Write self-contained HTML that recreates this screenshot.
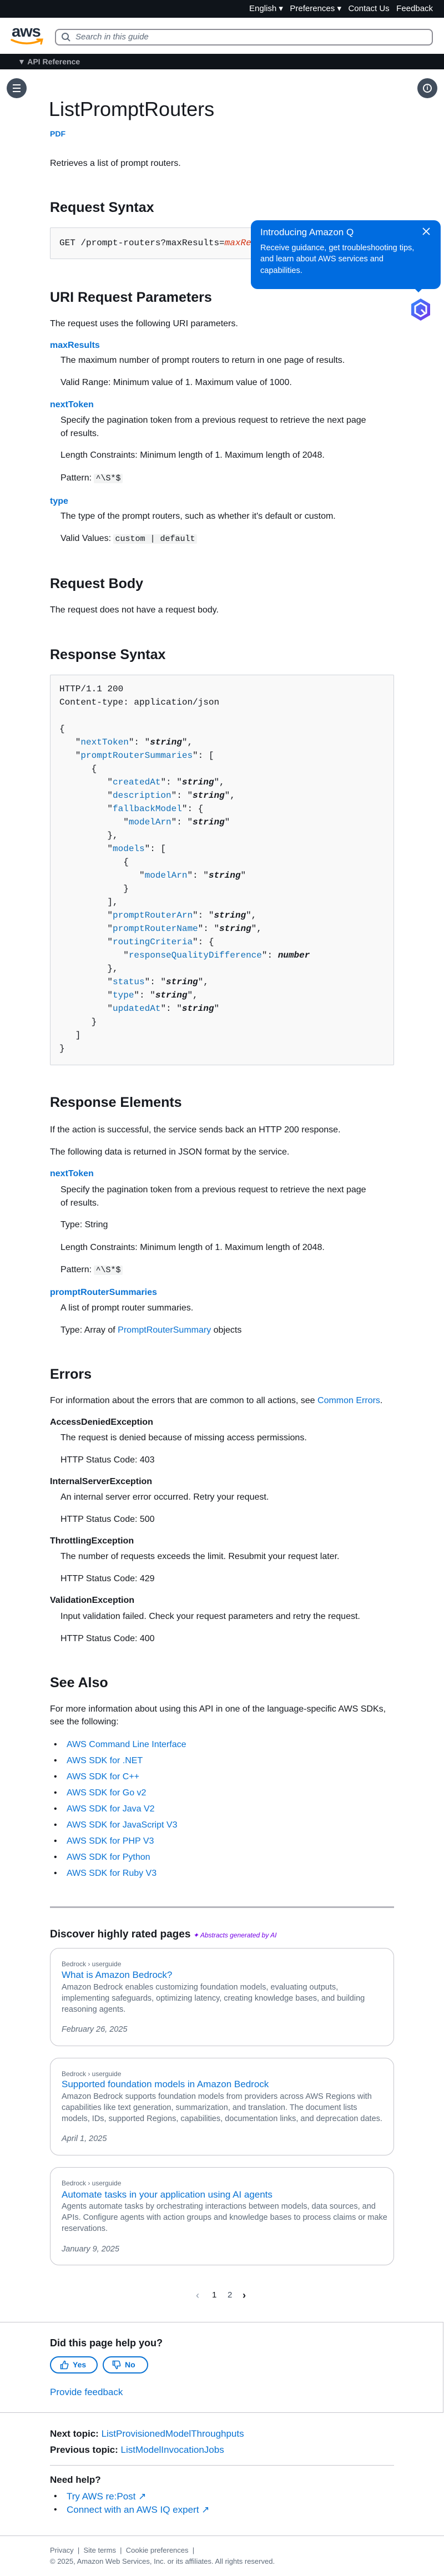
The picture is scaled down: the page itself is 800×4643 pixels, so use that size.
<!DOCTYPE html>
<html><head><meta charset="utf-8">
<style>
*{margin:0;padding:0;box-sizing:border-box}
body{width:800px;height:4643px;position:relative;background:#fff;font-family:"Liberation Sans",sans-serif;color:#16191f;overflow:hidden}
.a{position:absolute;white-space:nowrap;line-height:24px;font-size:16px}
.l{color:#0972d3}
.b{font-weight:bold}
.h2{font-size:25px;font-weight:bold;line-height:32px}
.m{font-family:"Liberation Mono",monospace}
.ic{font-family:"Liberation Mono",monospace;font-size:15px;background:#f2f3f3;padding:0 3px;border-radius:2px}
.code{position:absolute;left:90px;width:620px;background:#f9f9f9;border:1px solid #d1d5db;border-radius:2px;overflow:hidden}
pre{font-family:"Liberation Mono",monospace;font-size:16px;line-height:24px;color:#16191f}
.k{color:#0f6eb8}
.s{font-weight:bold;font-style:italic}
.card{position:absolute;left:90px;width:620px;border:1px solid #c6c6cd;border-radius:16px}
.bc{font-size:12px;color:#5f6b7a;line-height:16px}
.ct{font-size:17px;color:#0972d3;line-height:22px}
.cd{font-size:14.5px;color:#5f6b7a;line-height:20px}
.dt{font-size:14.5px;color:#5f6b7a;font-style:italic;line-height:20px}
</style></head><body>

<!-- top bar -->
<div style="position:absolute;left:0;top:0;width:800px;height:32px;background:#0f141a"></div>
<div class="a" style="top:4px;left:449px;color:#fff;font-size:15px">English ▾&nbsp;&nbsp; Preferences ▾&nbsp;&nbsp; Contact Us&nbsp;&nbsp; Feedback</div>
<!-- header -->
<div class="a" style="top:40px;left:21px;font-size:29px;font-weight:bold;color:#232f3e;letter-spacing:-1px;line-height:34px">aws</div>
<svg style="position:absolute;left:19px;top:68px" width="60" height="15" viewBox="0 0 60 15"><path d="M2 4 Q28 16 54 5" stroke="#ff9900" stroke-width="3.5" fill="none" stroke-linecap="round"/><path d="M48 3 L57 3 L55 11" stroke="#ff9900" stroke-width="3" fill="none" stroke-linecap="round"/></svg>
<div style="position:absolute;left:99px;top:52px;width:681px;height:30px;border:2px solid #8c8c94;border-radius:8px"></div>
<svg style="position:absolute;left:110px;top:58px" width="18" height="18" viewBox="0 0 18 18"><circle cx="7.5" cy="7.5" r="5.5" stroke="#5f6b7a" stroke-width="2" fill="none"/><path d="M11.5 11.5 L16 16" stroke="#5f6b7a" stroke-width="2"/></svg>
<div class="a" style="top:55px;left:136px;font-size:15px;font-style:italic;color:#5f6b7a">Search in this guide</div>
<div style="position:absolute;left:0;top:97px;width:800px;height:28px;background:#0f141a"></div>
<div class="a" style="top:99px;left:32px;font-size:14px;font-weight:bold;color:#a8aab2">▼ API Reference</div>
<!-- circle buttons -->
<div style="position:absolute;left:12px;top:141px;width:36px;height:36px;border-radius:50%;background:#414d5c"></div>
<div style="position:absolute;left:23px;top:152px;width:14px;height:2px;background:#fff;box-shadow:0 6px 0 #fff,0 12px 0 #fff"></div>
<div style="position:absolute;left:752px;top:141px;width:36px;height:36px;border-radius:50%;background:#414d5c"></div>
<div style="position:absolute;left:762px;top:151px;width:16px;height:16px;border-radius:50%;border:2px solid #fff;color:#fff;font-size:11px;font-weight:bold;text-align:center;line-height:12px">i</div>

<!-- title -->
<div class="a" style="top:177px;left:88px;font-size:36px;line-height:40px">ListPromptRouters</div>
<div class="a l b" style="top:229px;left:90px;font-size:14px">PDF</div>
<div class="a" style="top:283px;left:90px">Retrieves a list of prompt routers.</div>

<div class="a h2" style="top:358px;left:90px">Request Syntax</div>
<div class="code" style="top:410px;height:57px"><pre style="position:absolute;left:16px;top:15px">GET /prompt-routers?maxResults=<i style="color:#d13212">maxResults</i>&amp;nextToken=<i style="color:#d13212">nextToken</i>&amp;type=<i style="color:#d13212">type</i> HTTP/1.1</pre></div>

<div class="a h2" style="top:520px;left:90px">URI Request Parameters</div>
<div class="a" style="top:572px;left:90px">The request uses the following URI parameters.</div>
<div class="a l b" style="top:611px;left:90px">maxResults</div>
<div class="a" style="top:638px;left:109px">The maximum number of prompt routers to return in one page of results.</div>
<div class="a" style="top:678px;left:109px">Valid Range: Minimum value of 1. Maximum value of 1000.</div>
<div class="a l b" style="top:718px;left:90px">nextToken</div>
<div class="a" style="top:746px;left:109px">Specify the pagination token from a previous request to retrieve the next page</div>
<div class="a" style="top:770px;left:109px">of results.</div>
<div class="a" style="top:809px;left:109px">Length Constraints: Minimum length of 1. Maximum length of 2048.</div>
<div class="a" style="top:850px;left:109px">Pattern: <span class="ic">^\S*$</span></div>
<div class="a l b" style="top:892px;left:90px">type</div>
<div class="a" style="top:919px;left:109px">The type of the prompt routers, such as whether it's default or custom.</div>
<div class="a" style="top:959px;left:109px">Valid Values: <span class="ic">custom | default</span></div>

<div class="a h2" style="top:1036px;left:90px">Request Body</div>
<div class="a" style="top:1088px;left:90px">The request does not have a request body.</div>

<div class="a h2" style="top:1164px;left:90px">Response Syntax</div>
<div class="code" style="top:1216px;height:704px"><pre style="position:absolute;left:16px;top:13px">HTTP/1.1 200
Content-type: application/json

{
   "<span class="k">nextToken</span>": "<span class="s">string</span>",
   "<span class="k">promptRouterSummaries</span>": [
      {
         "<span class="k">createdAt</span>": "<span class="s">string</span>",
         "<span class="k">description</span>": "<span class="s">string</span>",
         "<span class="k">fallbackModel</span>": {
            "<span class="k">modelArn</span>": "<span class="s">string</span>"
         },
         "<span class="k">models</span>": [
            {
               "<span class="k">modelArn</span>": "<span class="s">string</span>"
            }
         ],
         "<span class="k">promptRouterArn</span>": "<span class="s">string</span>",
         "<span class="k">promptRouterName</span>": "<span class="s">string</span>",
         "<span class="k">routingCriteria</span>": {
            "<span class="k">responseQualityDifference</span>": <span class="s">number</span>
         },
         "<span class="k">status</span>": "<span class="s">string</span>",
         "<span class="k">type</span>": "<span class="s">string</span>",
         "<span class="k">updatedAt</span>": "<span class="s">string</span>"
      }
   ]
}</pre></div>

<div class="a h2" style="top:1971px;left:90px">Response Elements</div>
<div class="a" style="top:2025px;left:90px">If the action is successful, the service sends back an HTTP 200 response.</div>
<div class="a" style="top:2065px;left:90px">The following data is returned in JSON format by the service.</div>
<div class="a l b" style="top:2104px;left:90px">nextToken</div>
<div class="a" style="top:2133px;left:109px">Specify the pagination token from a previous request to retrieve the next page</div>
<div class="a" style="top:2157px;left:109px">of results.</div>
<div class="a" style="top:2196px;left:109px">Type: String</div>
<div class="a" style="top:2237px;left:109px">Length Constraints: Minimum length of 1. Maximum length of 2048.</div>
<div class="a" style="top:2277px;left:109px">Pattern: <span class="ic">^\S*$</span></div>
<div class="a l b" style="top:2318px;left:90px">promptRouterSummaries</div>
<div class="a" style="top:2346px;left:109px">A list of prompt router summaries.</div>
<div class="a" style="top:2386px;left:109px">Type: Array of <span class="l">PromptRouterSummary</span> objects</div>

<div class="a h2" style="top:2461px;left:90px">Errors</div>
<div class="a" style="top:2513px;left:90px">For information about the errors that are common to all actions, see <span class="l">Common Errors</span>.</div>
<div class="a b" style="top:2552px;left:90px">AccessDeniedException</div>
<div class="a" style="top:2580px;left:109px">The request is denied because of missing access permissions.</div>
<div class="a" style="top:2620px;left:109px">HTTP Status Code: 403</div>
<div class="a b" style="top:2659px;left:90px">InternalServerException</div>
<div class="a" style="top:2687px;left:109px">An internal server error occurred. Retry your request.</div>
<div class="a" style="top:2727px;left:109px">HTTP Status Code: 500</div>
<div class="a b" style="top:2766px;left:90px">ThrottlingException</div>
<div class="a" style="top:2794px;left:109px">The number of requests exceeds the limit. Resubmit your request later.</div>
<div class="a" style="top:2834px;left:109px">HTTP Status Code: 429</div>
<div class="a b" style="top:2873px;left:90px">ValidationException</div>
<div class="a" style="top:2902px;left:109px">Input validation failed. Check your request parameters and retry the request.</div>
<div class="a" style="top:2942px;left:109px">HTTP Status Code: 400</div>

<div class="a h2" style="top:3017px;left:90px">See Also</div>
<div class="a" style="top:3069px;left:90px">For more information about using this API in one of the language-specific AWS SDKs,</div>
<div class="a" style="top:3092px;left:90px">see the following:</div>
<div class="a" style="top:3133px;left:97px">•</div><div class="a l" style="top:3133px;left:120px">AWS Command Line Interface</div>
<div class="a" style="top:3162px;left:97px">•</div><div class="a l" style="top:3162px;left:120px">AWS SDK for .NET</div>
<div class="a" style="top:3191px;left:97px">•</div><div class="a l" style="top:3191px;left:120px">AWS SDK for C++</div>
<div class="a" style="top:3220px;left:97px">•</div><div class="a l" style="top:3220px;left:120px">AWS SDK for Go v2</div>
<div class="a" style="top:3249px;left:97px">•</div><div class="a l" style="top:3249px;left:120px">AWS SDK for Java V2</div>
<div class="a" style="top:3278px;left:97px">•</div><div class="a l" style="top:3278px;left:120px">AWS SDK for JavaScript V3</div>
<div class="a" style="top:3307px;left:97px">•</div><div class="a l" style="top:3307px;left:120px">AWS SDK for PHP V3</div>
<div class="a" style="top:3336px;left:97px">•</div><div class="a l" style="top:3336px;left:120px">AWS SDK for Python</div>
<div class="a" style="top:3365px;left:97px">•</div><div class="a l" style="top:3365px;left:120px">AWS SDK for Ruby V3</div>

<div style="position:absolute;left:90px;top:3436px;width:620px;height:3px;background:#b4b4bb"></div>
<div class="a" style="top:3473px;left:90px;line-height:28px"><b style="font-size:19px">Discover highly rated pages</b> <span style="font-size:12px;font-style:italic;color:#7300e6">✦ Abstracts generated by AI</span></div>

<div class="card" style="top:3511px;height:177px"></div>
<div class="a bc" style="top:3532px;left:111px">Bedrock › userguide</div>
<div class="a ct" style="top:3549px;left:111px">What is Amazon Bedrock?</div>
<div class="a cd" style="top:3572px;left:111px">Amazon Bedrock enables customizing foundation models, evaluating outputs,</div>
<div class="a cd" style="top:3592px;left:111px">implementing safeguards, optimizing latency, creating knowledge bases, and building</div>
<div class="a cd" style="top:3612px;left:111px">reasoning agents.</div>
<div class="a dt" style="top:3648px;left:111px">February 26, 2025</div>

<div class="card" style="top:3709px;height:176px"></div>
<div class="a bc" style="top:3730px;left:111px">Bedrock › userguide</div>
<div class="a ct" style="top:3746px;left:111px">Supported foundation models in Amazon Bedrock</div>
<div class="a cd" style="top:3769px;left:111px">Amazon Bedrock supports foundation models from providers across AWS Regions with</div>
<div class="a cd" style="top:3789px;left:111px">capabilities like text generation, summarization, and translation. The document lists</div>
<div class="a cd" style="top:3809px;left:111px">models, IDs, supported Regions, capabilities, documentation links, and deprecation dates.</div>
<div class="a dt" style="top:3845px;left:111px">April 1, 2025</div>

<div class="card" style="top:3906px;height:177px"></div>
<div class="a bc" style="top:3927px;left:111px">Bedrock › userguide</div>
<div class="a ct" style="top:3945px;left:111px">Automate tasks in your application using AI agents</div>
<div class="a cd" style="top:3967px;left:111px">Agents automate tasks by orchestrating interactions between models, data sources, and</div>
<div class="a cd" style="top:3987px;left:111px">APIs. Configure agents with action groups and knowledge bases to process claims or make</div>
<div class="a cd" style="top:4007px;left:111px">reservations.</div>
<div class="a dt" style="top:4044px;left:111px">January 9, 2025</div>

<div class="a" style="top:4125px;left:353px;color:#8d99a8;font-size:18px">‹</div>
<div class="a" style="top:4125px;left:382px;font-size:15px">1</div>
<div class="a" style="top:4125px;left:410px;font-size:15px;color:#414d5c">2</div>
<div class="a" style="top:4125px;left:437px;font-size:18px;font-weight:bold">›</div>

<div style="position:absolute;left:-1px;top:4185px;width:800px;height:164px;border:1px solid #c6c6cd"></div>
<div class="a b" style="top:4211px;left:90px;font-size:18px">Did this page help you?</div>
<div style="position:absolute;left:90px;top:4247px;width:86px;height:31px;border:2px solid #0972d3;border-radius:16px"></div>
<svg style="position:absolute;left:108px;top:4254px" width="16" height="17" viewBox="0 0 16 17"><path d="M1.5 8 H4.5 V15.5 H1.5 Z M4.5 8 L8 1.5 Q10 1.5 9.5 4 L9 6.5 H14 Q15 7 14.5 8.5 L13 14.5 Q12.5 15.5 11 15.5 H4.5" fill="none" stroke="#0972d3" stroke-width="1.6"/></svg>
<div class="a l b" style="top:4250px;left:131px;font-size:14px">Yes</div>
<div style="position:absolute;left:185px;top:4247px;width:82px;height:31px;border:2px solid #0972d3;border-radius:16px"></div>
<svg style="position:absolute;left:202px;top:4254px" width="16" height="17" viewBox="0 0 16 17" transform="scale(1,-1)"><path d="M1.5 8 H4.5 V15.5 H1.5 Z M4.5 8 L8 1.5 Q10 1.5 9.5 4 L9 6.5 H14 Q15 7 14.5 8.5 L13 14.5 Q12.5 15.5 11 15.5 H4.5" fill="none" stroke="#0972d3" stroke-width="1.6"/></svg>
<div class="a l b" style="top:4250px;left:225px;font-size:14px">No</div>
<div class="a l" style="top:4300px;left:90px;font-size:17px">Provide feedback</div>

<div class="a" style="top:4375px;left:90px;font-size:17px"><b>Next topic:</b> <span class="l">ListProvisionedModelThroughputs</span></div>
<div class="a" style="top:4404px;left:90px;font-size:17px"><b>Previous topic:</b> <span class="l">ListModelInvocationJobs</span></div>
<div style="position:absolute;left:90px;top:4443px;width:620px;height:1px;background:#c6c6cd"></div>
<div class="a b" style="top:4458px;left:90px;font-size:17px">Need help?</div>
<div class="a" style="top:4488px;left:97px">•</div><div class="a l" style="top:4488px;left:120px;font-size:17px">Try AWS re:Post ↗</div>
<div class="a" style="top:4512px;left:97px">•</div><div class="a l" style="top:4512px;left:120px;font-size:17px">Connect with an AWS IQ expert ↗</div>
<div style="position:absolute;left:0;top:4570px;width:800px;height:1px;background:#c6c6cd"></div>
<div class="a" style="top:4587px;left:90px;font-size:13px;color:#5f6b7a;line-height:20px">Privacy&nbsp; |&nbsp; Site terms&nbsp; |&nbsp; Cookie preferences&nbsp; |</div>
<div class="a" style="top:4607px;left:90px;font-size:13px;color:#5f6b7a;line-height:20px">© 2025, Amazon Web Services, Inc. or its affiliates. All rights reserved.</div>

<!-- Amazon Q popup -->
<div style="position:absolute;left:452px;top:397px;width:342px;height:124px;background:#006ce0;border-radius:12px"></div>
<div style="position:absolute;left:747px;top:520px;width:0;height:0;border-left:7px solid transparent;border-right:7px solid transparent;border-top:7px solid #006ce0"></div>
<div class="a" style="top:407px;left:469px;color:#fff;font-size:17px">Introducing Amazon Q</div>
<div class="a" style="top:437px;left:469px;color:#fff;font-size:14.5px;line-height:20px">Receive guidance, get troubleshooting tips,</div>
<div class="a" style="top:457px;left:469px;color:#fff;font-size:14.5px;line-height:20px">and learn about AWS services and</div>
<div class="a" style="top:478px;left:469px;color:#fff;font-size:14.5px;line-height:20px">capabilities.</div>
<svg style="position:absolute;left:761px;top:410px" width="14" height="14" viewBox="0 0 14 14"><path d="M1 1L13 13M13 1L1 13" stroke="#fff" stroke-width="1.8"/></svg>
<svg style="position:absolute;left:739px;top:537px" width="38" height="42" viewBox="0 0 38 42"><defs><linearGradient id="g" x1="0" y1="0" x2="1" y2="1"><stop offset="0" stop-color="#2f8fff"/><stop offset="1" stop-color="#7b2ee8"/></linearGradient></defs><path d="M19 1 L36 11 L36 31 L19 41 L2 31 L2 11 Z" fill="url(#g)"/><path d="M19 9 L29 15 L29 27 L19 33 L9 27 L9 15 Z" fill="none" stroke="#fff" stroke-width="3"/><path d="M20 21 L27 28" stroke="#fff" stroke-width="3"/></svg>
</body></html>
